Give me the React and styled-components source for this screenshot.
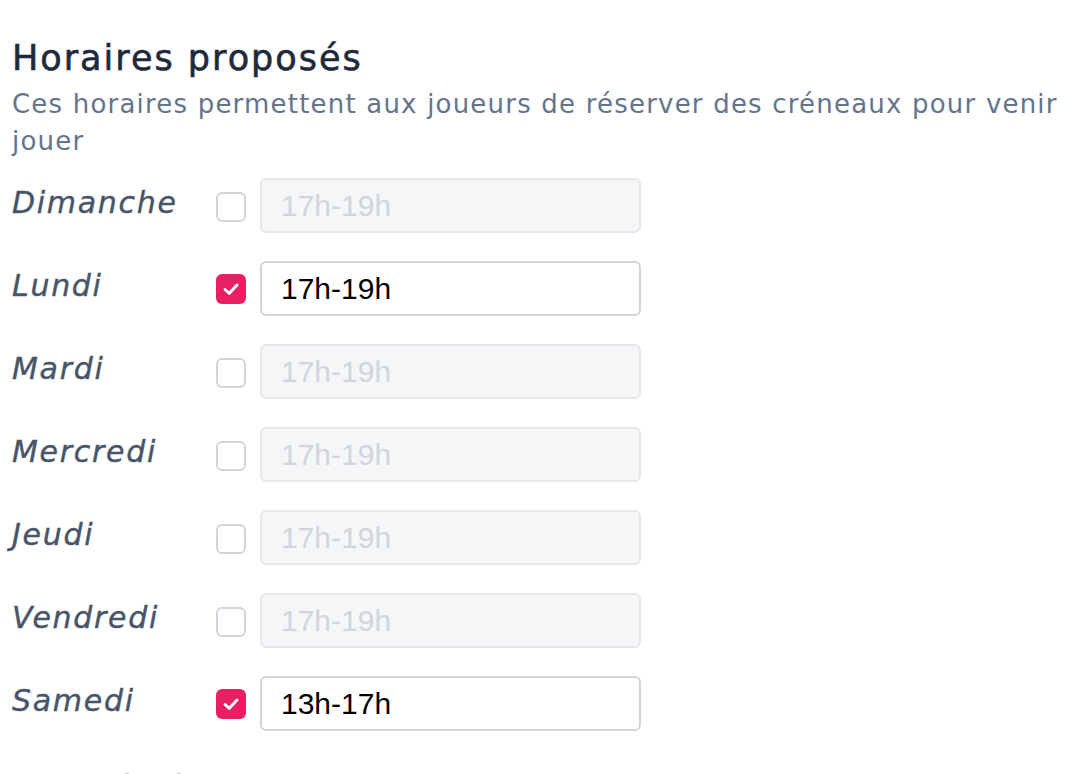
import styled, { createGlobalStyle } from 'styled-components';

const GlobalStyle = createGlobalStyle`
  body {
    margin: 0;
    background: #ffffff;
    font-family: "DejaVu Sans", "Noto Sans", sans-serif;
  }
`;

const Page = styled.div`
  padding: 36px 12px 0;
  height: 774px;
  box-sizing: border-box;
  overflow: hidden;
`;

const Title = styled.h2`
  margin: 0;
  font-size: 35px;
  font-weight: 400;
  letter-spacing: 2px;
  line-height: 44px;
  color: #1e293b;
  -webkit-text-stroke: 0.6px #1e293b;
`;

const Subtitle = styled.p`
  margin: 6px 0 18px;
  font-size: 26px;
  letter-spacing: 1.2px;
  line-height: 37px;
  color: #64748b;
`;

const Schedule = styled.div`
  display: flex;
  flex-direction: column;
  gap: 28px;
`;

const Row = styled.div`
  display: flex;
  align-items: flex-start;
`;

const DayLabel = styled.span`
  width: 192px;
  margin-right: 12px;
  padding-top: 7px;
  font-size: 30px;
  font-style: italic;
  letter-spacing: 1.7px;
  line-height: 36px;
  color: #475569;
  -webkit-text-stroke: 0.4px #475569;
`;

const Box = styled.span`
  width: 30px;
  height: 30px;
  margin: ${(p) => (p.$checked ? '13px 14px 0 0' : '14px 14px 0 0')};
  box-sizing: border-box;
  border-radius: 6px;
  display: flex;
  align-items: center;
  justify-content: center;
  flex-shrink: 0;
  border: ${(p) => (p.$checked ? 'none' : '2px solid #d1d5db')};
  background: ${(p) => (p.$checked ? '#e91e63' : '#ffffff')};
`;

const TimeInput = styled.input`
  width: 381px;
  height: 55px;
  box-sizing: border-box;
  padding: 0 19px;
  border-radius: 6px;
  border: 2px solid ${(p) => (p.disabled ? '#e5e7eb' : '#d1d5db')};
  background: ${(p) => (p.disabled ? '#f5f6f8' : '#ffffff')};
  font-family: "Liberation Sans", Arial, sans-serif;
  font-size: 30px;
  color: #000000;
  outline: none;

  &::placeholder {
    color: #d1d5db;
  }
`;

const NextTitle = styled(Title)`
  margin-top: 36px;
`;

const days = [
  { name: 'Dimanche', checked: false, value: '' },
  { name: 'Lundi', checked: true, value: '17h-19h' },
  { name: 'Mardi', checked: false, value: '' },
  { name: 'Mercredi', checked: false, value: '' },
  { name: 'Jeudi', checked: false, value: '' },
  { name: 'Vendredi', checked: false, value: '' },
  { name: 'Samedi', checked: true, value: '13h-17h' },
];

function Check() {
  return (
    <svg width="20" height="20" viewBox="0 0 20 20" fill="none">
      <polyline
        points="4,10.5 8.3,14.3 16,6"
        stroke="#ffffff"
        strokeWidth="3"
        strokeLinecap="round"
        strokeLinejoin="round"
      />
    </svg>
  );
}

export default function App() {
  return (
    <Page>
      <GlobalStyle />
      <Title>Horaires proposés</Title>
      <Subtitle>
        Ces horaires permettent aux joueurs de réserver des créneaux pour venir jouer
      </Subtitle>
      <Schedule>
        {days.map((d) => (
          <Row key={d.name}>
            <DayLabel>{d.name}</DayLabel>
            <Box $checked={d.checked}>{d.checked && <Check />}</Box>
            <TimeInput
              disabled={!d.checked}
              placeholder="17h-19h"
              defaultValue={d.value}
            />
          </Row>
        ))}
      </Schedule>
      <NextTitle>Description</NextTitle>
    </Page>
  );
}
